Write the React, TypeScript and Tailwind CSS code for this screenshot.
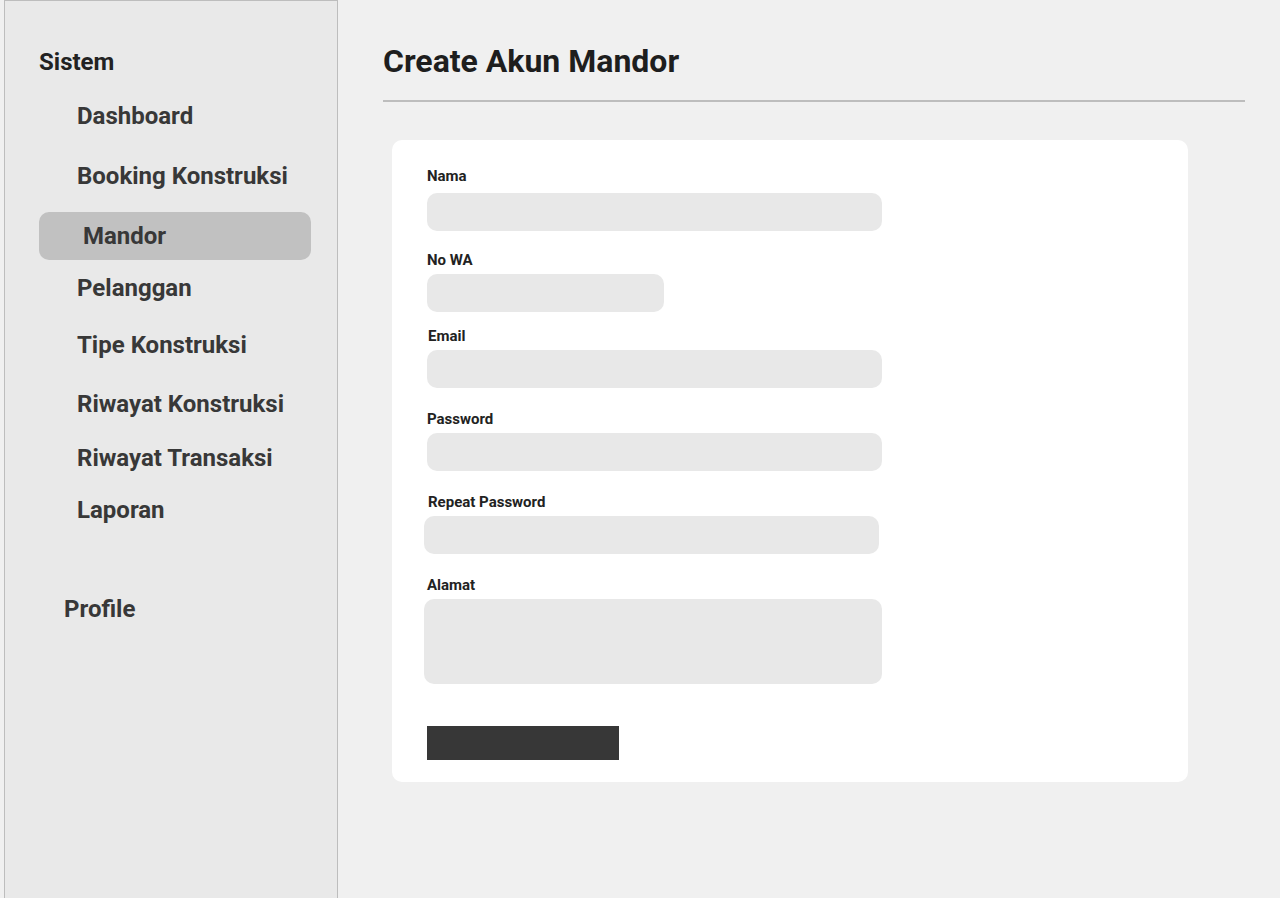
const NAV: { label: string; mt: string; active?: boolean }[] = [
  { label: 'Dashboard', mt: 'mt-[26px]' },
  { label: 'Booking Konstruksi', mt: 'mt-[32px]' },
  { label: 'Mandor', mt: 'mt-[22px]', active: true },
  { label: 'Pelanggan', mt: 'mt-[14px]' },
  { label: 'Tipe Konstruksi', mt: 'mt-[29px]' },
  { label: 'Riwayat Konstruksi', mt: 'mt-[31px]' },
  { label: 'Riwayat Transaksi', mt: 'mt-[26px]' },
  { label: 'Laporan', mt: 'mt-[24px]' },
];

function Field({ label, mt, gap = 'mb-[5px]', width = 'w-[455px]', shift = 'ml-[35px]', labelShift = 'ml-[35px]', tall }: {
  label: string; mt: string; gap?: string; width?: string; shift?: string; labelShift?: string; tall?: boolean;
}) {
  return (
    <div className={`flex flex-col ${mt}`}>
      <label className={`${labelShift} ${gap} text-[15px] leading-[18px] font-bold text-[#222]`}>{label}</label>
      {tall ? (
        <textarea className={`${width} ${shift} h-[85px] rounded-[10px] bg-[#e8e8e8] resize-none outline-none`} />
      ) : (
        <input className={`${width} ${shift} h-[38px] rounded-[10px] bg-[#e8e8e8] outline-none`} />
      )}
    </div>
  );
}

export default function App() {
  return (
    <div className="flex min-h-screen h-[898px] bg-[#f0f0f0] overflow-hidden" style={{ fontFamily: 'Roboto, "Liberation Sans", sans-serif' }}>
      <aside className="ml-[4px] w-[334px] shrink-0 border border-b-0 border-[#bdbdbd] bg-[#e9e9e9] pl-[34px] pr-[26px]">
        <div className="mt-[47px] text-[24px] leading-[28px] font-bold text-[#222]">Sistem</div>
        <nav className="flex flex-col">
          {NAV.map((n) =>
            n.active ? (
              <div key={n.label} className={`${n.mt} rounded-[10px] bg-[#c1c1c1] py-[10px] pl-[44px] text-[24px] leading-[28px] font-bold text-[#383838]`}>
                {n.label}
              </div>
            ) : (
              <div key={n.label} className={`${n.mt} pl-[38px] text-[24px] leading-[28px] font-bold text-[#383838]`}>
                {n.label}
              </div>
            )
          )}
          <div className="mt-[71px] pl-[25px] text-[24px] leading-[28px] font-bold text-[#383838]">Profile</div>
        </nav>
      </aside>

      <main className="flex-1 pl-[45px] pr-[35px]">
        <h1 className="mt-[41px] text-[32px] leading-[40px] font-bold text-[#1e1e1e]">Create Akun Mandor</h1>
        <div className="mt-[19px] h-[2px] bg-[#bdbdbd]" />

        <div className="ml-[9px] mt-[38px] w-[796px] h-[642px] rounded-[10px] bg-white">
          <div className="flex flex-col pt-[27px]">
            <Field label="Nama" mt="mt-0" gap="mb-[8px]" />
            <Field label="No WA" mt="mt-[20px]" width="w-[237px]" />
            <Field label="Email" mt="mt-[15px]" labelShift="ml-[36px]" />
            <Field label="Password" mt="mt-[22px]" />
            <Field label="Repeat Password" mt="mt-[22px]" labelShift="ml-[36px]" shift="ml-[32px]" />
            <Field label="Alamat" mt="mt-[22px]" width="w-[458px]" shift="ml-[32px]" tall />
            <button className="ml-[35px] mt-[42px] w-[192px] h-[34px] bg-[#373737]" />
          </div>
        </div>
      </main>
    </div>
  );
}
